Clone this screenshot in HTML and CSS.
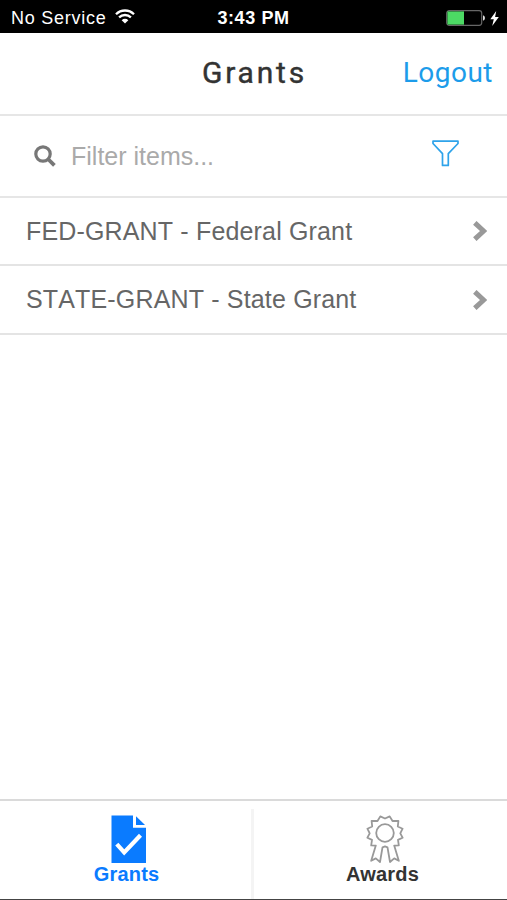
FILE: index.html
```html
<!DOCTYPE html>
<html lang="en">
<head>
    <meta charset="UTF-8">
    <meta name="viewport" content="width=device-width, initial-scale=1.0">
    <title>Grants</title>
    <link rel="stylesheet" href="styles.css">
</head>
<body>
    <div class="status-bar">
        <div class="carrier">
            <span>No Service</span>
            <svg class="wifi" width="20" height="15" viewBox="0 0 20 15" fill="none" stroke="#fff" stroke-width="2.3">
                <path d="M1 5.2a12.8 12.8 0 0 1 18 0"/>
                <path d="M4.1 8.4a8.4 8.4 0 0 1 11.8 0"/>
                <path d="M10 14.5L6.7 11.2a4.7 4.7 0 0 1 6.6 0z" fill="#fff" stroke="none"/>
            </svg>
        </div>
        <div class="clock">3:43 PM</div>
        <div class="power">
            <svg width="40" height="16" viewBox="0 0 40 16">
                <rect x=".7" y=".7" width="35" height="14.6" rx="2.5" fill="none" stroke="#666" stroke-width="1.2"/>
                <path d="M1.4 1.4h16.6v13.2H1.4z" fill="#4cd964"/>
                <path d="M37 5.3q2 .7 2 2.7t-2 2.7z" fill="#ddd"/>
            </svg>
            <svg width="9" height="15" viewBox="0 0 9 15">
                <path d="M6.2 0L.3 8.2h3.5L2.2 15 8.8 6H5.1z" fill="#fff"/>
            </svg>
        </div>
    </div>

    <header class="header">
        <h1>Grants</h1>
        <a class="logout" href="#">Logout</a>
    </header>

    <div class="search">
        <svg class="search-icon" width="22" height="22" viewBox="0 0 22 22" fill="none" stroke="#777">
            <circle cx="9" cy="9" r="7.2" stroke-width="3.2"/>
            <path d="M14 14l6.4 6.4" stroke-width="3.8"/>
        </svg>
        <span class="placeholder">Filter items...</span>
        <svg class="funnel" width="27" height="27" viewBox="0 0 27 27" fill="none" stroke="#2ea3ea" stroke-width="1.7" stroke-linejoin="round">
            <path d="M1 1.2h25v2.3L16.3 13.6v11.8h-5.8V13.6L1 3.5z"/>
        </svg>
    </div>

    <ul class="list">
        <li>
            <span>FED-GRANT - Federal Grant</span>
            <svg class="chevron" width="14" height="20" viewBox="0 0 14 20">
                <path d="M1.8 1.8L10.6 10l-8.8 8.2"/>
            </svg>
        </li>
        <li>
            <span>STATE-GRANT - State Grant</span>
            <svg class="chevron" width="14" height="20" viewBox="0 0 14 20">
                <path d="M1.8 1.8L10.6 10l-8.8 8.2"/>
            </svg>
        </li>
    </ul>

    <nav class="tabs">
        <a class="tab active" href="#">
            <svg width="36" height="48" viewBox="0 0 36 48">
                <path d="M.5.5H22v12.3h13V48H.5z" fill="#0a7bff"/>
                <path d="M25 1.2l9 8.8h-9z" fill="#0a7bff"/>
                <path d="M5.8 29.2l7.4 8.2L29.5 20.3" fill="none" stroke="#fff" stroke-width="4.2"/>
            </svg>
            <span>Grants</span>
        </a>
        <a class="tab" href="#">
            <svg width="38" height="48" viewBox="0 0 38 48" fill="none" stroke="#999" stroke-width="1.8" stroke-linejoin="round">
                <path d="M16.5 32.3L14 47l-4.2-3.6-4.6 2.4L9.8 30.6l-4.6-.2.8-5.5-4.6-2.2 2.3-4.4-2.3-4.6 4.8-2.2-.6-5.5 5.9 0 2.8-4.6L19 3.5l4.7-2.1L26.5 6h5.9l-.6 5.5 4.8 2.2-2.3 4.6 2.3 4.4-4.6 2.2.8 5.5-4.6.2 4.6 15.2-4.6-2.4L24 47l-2.5-14.7L19 31.4z"/>
                <circle cx="19" cy="18" r="8.8"/>
            </svg>
            <span>Awards</span>
        </a>
    </nav>
</body>
</html>
```
FILE: styles.css
```css
* {
    box-sizing: border-box;
}

body {
    margin: 0;
    height: 900px;
    display: flex;
    flex-direction: column;
    background-color: #fff;
    font-family: "Liberation Sans", Arial, sans-serif;
    overflow: hidden;
}

a {
    text-decoration: none;
}

.status-bar {
    height: 33px;
    padding: 3px 8px 0 11px;
    display: grid;
    grid-template-columns: 1fr auto 1fr;
    align-items: center;
    background-color: #000;
    color: #fff;
    font-size: 18px;
}

.carrier {
    display: flex;
    align-items: center;
    gap: 8px;
    letter-spacing: 0.75px;
}

.wifi {
    margin-top: -3px;
}

.clock {
    margin-right: 3px;
    font-weight: bold;
    letter-spacing: 0.6px;
}

.power {
    display: flex;
    justify-content: flex-end;
    align-items: center;
    gap: 4px;
}

.header {
    height: 83px;
    padding: 0 14px 2px;
    display: grid;
    grid-template-columns: 1fr auto 1fr;
    align-items: center;
    border-bottom: 2px solid #e6e6e6;
    font-family: Roboto, sans-serif;
}

.header h1 {
    grid-column: 2;
    margin: 0 -2px 0 0;
    font-size: 30px;
    font-weight: 400;
    letter-spacing: 2.8px;
    -webkit-text-stroke: 0.4px #333;
    color: #333;
}

.logout {
    justify-self: end;
    font-size: 28px;
    letter-spacing: 0.5px;
    color: #1c9cea;
}

.search {
    height: 82px;
    padding: 0 48px 0 34px;
    display: flex;
    align-items: center;
    border-bottom: 2px solid #e6e6e6;
}

.placeholder {
    flex: 1;
    margin-left: 15px;
    font-size: 25px;
    color: #aaa;
}

.funnel {
    margin-top: -5px;
}

.list {
    flex: 1;
    margin: 0;
    padding: 0;
    list-style: none;
}

.list li {
    height: 69px;
    padding: 0 20px 0 26px;
    display: flex;
    justify-content: space-between;
    align-items: center;
    border-bottom: 2px solid #e4e4e4;
    font-size: 25px;
    font-kerning: none;
    letter-spacing: 0.16px;
    color: #666;
}

.list li:first-child {
    height: 68px;
}

.chevron path {
    fill: none;
    stroke: #999;
    stroke-width: 5;
}

.tabs {
    height: 101px;
    padding-top: 8px;
    display: flex;
    border-top: 2px solid #dadada;
    border-bottom: 1px solid #444;
}

.tab {
    flex: 1;
    padding: 6px 0 0 2px;
    display: flex;
    flex-direction: column;
    align-items: center;
    font-size: 20px;
    font-weight: bold;
    letter-spacing: 0.2px;
    line-height: 22px;
    color: #333;
}

.tab svg {
    margin-left: 4px;
}

.tab + .tab {
    padding-left: 4px;
    border-left: 3px solid #f4f4f4;
}

.tab.active {
    color: #0a7bff;
}
```
